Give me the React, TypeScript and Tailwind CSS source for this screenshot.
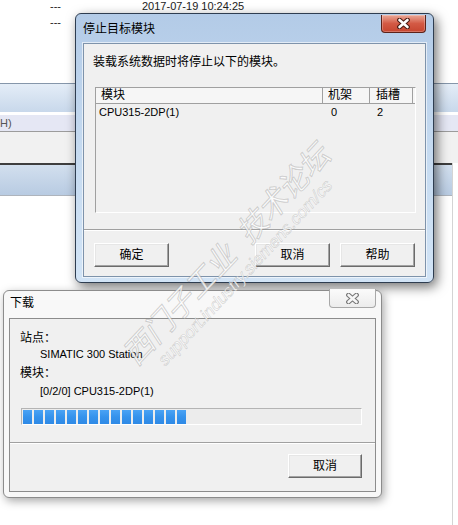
type BtnProps = { label: string; className?: string };

function ClassicButton({ label, className = "" }: BtnProps) {
  return (
    <button
      type="button"
      className={[
        "flex h-[24px] items-center justify-center border border-t-white border-l-white border-b-[#6b6b6b] border-r-[#6b6b6b] bg-[#f0f0f0] text-[12px] text-black shadow-[inset_-1px_-1px_0_#a3a3a3,inset_1px_1px_0_#e6e6e6]",
        className,
      ].join(" ")}
    >
      {label}
    </button>
  );
}

function CloseGlyph({ active }: { active: boolean }) {
  return (
    <svg width="15" height="11" viewBox="0 0 15 11">
      <path
        d="M3.5 2 L11.5 9 M11.5 2 L3.5 9"
        stroke={active ? "#4a1c14" : "#767676"}
        strokeWidth="4.8"
        strokeLinecap="round"
        fill="none"
      />
      <path
        d="M3.5 2 L11.5 9 M11.5 2 L3.5 9"
        stroke={active ? "#ffffff" : "#f6f6f6"}
        strokeWidth="2.6"
        strokeLinecap="round"
        fill="none"
      />
    </svg>
  );
}

function Separator() {
  return (
    <div className="flex flex-col">
      <div className="h-px bg-[#a0a0a0]" />
      <div className="h-px bg-white" />
    </div>
  );
}

function StopModulesDialog() {
  return (
    <div className="absolute left-[75px] top-[13px] flex h-[270px] w-[359px] flex-col rounded-[6px] border border-[#2e3d50] bg-gradient-to-b from-[#b3cbe7] via-[#c5daf0] to-[#d2e4f6] px-[7px] pb-[5px] shadow-[3px_4px_12px_rgba(0,0,0,0.55)]">
      <div className="flex h-[29px] items-start justify-between">
        <span className="mt-[7px] text-[12px] leading-[16px] text-black">停止目标模块</span>
        <div className="mt-px flex h-[18px] w-[45px] items-center justify-center rounded-b-[4px] border border-t-0 border-[#5c2219] bg-gradient-to-b from-[#e9a797] via-[#d35a45] to-[#c6452f] shadow-[inset_0_0_0_1px_rgba(255,255,255,0.25)]">
          <CloseGlyph active />
        </div>
      </div>

      <div className="flex flex-1 flex-col border border-[#7e93ab] bg-[#f0f0f0] shadow-[0_0_0_1px_rgba(255,255,255,0.6)]">
        <p className="mt-[10px] pl-[9px] text-[12px] leading-[16px] text-black">
          装载系统数据时将停止以下的模块。
        </p>

        <div className="ml-[11px] mt-[17px] h-[126px] w-[321px] border border-t-[#a0a0a0] border-l-[#a0a0a0] border-b-white border-r-white bg-[#f0f0f0] text-[12px] text-black">
          <div className="flex h-[16px] border-b border-[#a0a0a0] bg-[#f6f6f6] leading-[15px]">
            <div className="w-[227px] border-r border-[#a0a0a0] pl-[5px]">模块</div>
            <div className="w-[47px] border-r border-[#a0a0a0] pl-[5px]">机架</div>
            <div className="w-[43px] border-r border-[#a0a0a0] pl-[6px]">插槽</div>
          </div>
          <div className="flex h-[16px] text-[11px] leading-[16px]">
            <div className="w-[227px] pl-[3px]">CPU315-2DP(1)</div>
            <div className="w-[47px] pl-[8px]">0</div>
            <div className="w-[43px] pl-[7px]">2</div>
          </div>
        </div>

        <div className="mt-[16px]">
          <Separator />
        </div>

        <div className="mt-[12px] flex pl-[10px] pr-[10px]">
          <ClassicButton label="确定" className="w-[75px]" />
          <ClassicButton label="取消" className="ml-auto w-[75px]" />
          <ClassicButton label="帮助" className="ml-[10px] w-[75px]" />
        </div>
      </div>
    </div>
  );
}

function DownloadDialog() {
  const blocks = Array.from({ length: 15 }, (_, i) => i);
  return (
    <div className="absolute left-[3px] top-[290px] flex h-[208px] w-[379px] flex-col rounded-[6px] border border-[#8c8c8c] bg-[#f8f8f8] px-[5px] pb-[5px] shadow-[2px_3px_10px_rgba(0,0,0,0.35)]">
      <div className="flex h-[27px] items-start justify-between">
        <span className="ml-px mt-[4px] text-[12px] leading-[16px] text-black">下载</span>
        <div className="-mt-[2px] flex h-[19px] w-[47px] items-center justify-center rounded-b-[4px] border border-t-0 border-[#a8a8a8] bg-gradient-to-b from-[#fbfbfb] to-[#ececec]">
          <CloseGlyph active={false} />
        </div>
      </div>

      <div className="flex flex-1 flex-col border border-[#8c8c8c] bg-[#f0f0f0] text-black">
        <p className="mt-[11px] pl-[10px] text-[12px] leading-[16px]">站点：</p>
        <p className="pl-[30px] text-[11px] leading-[16px]">SIMATIC 300 Station</p>
        <p className="mt-[3px] pl-[10px] text-[12px] leading-[16px]">模块：</p>
        <p className="mt-[2px] pl-[30px] text-[11px] leading-[16px]">[0/2/0] CPU315-2DP(1)</p>

        <div className="ml-[11px] mt-[9px] flex h-[17px] w-[341px] items-start gap-[2px] border border-t-[#b4b4b4] border-l-[#b4b4b4] border-b-white border-r-white bg-[#ececec] pl-px pt-px">
          {blocks.map((i) => (
            <div key={i} className="h-[14px] w-[9px] bg-gradient-to-b from-[#4aa3f5] via-[#3592ec] to-[#2f8ae6]" />
          ))}
        </div>

        <div className="mt-[17px]">
          <Separator />
        </div>

        <div className="mt-[10px] flex justify-end pr-[13px]">
          <ClassicButton label="取消" className="w-[74px]" />
        </div>
      </div>
    </div>
  );
}

function Backdrop() {
  return (
    <div className="flex h-full flex-col text-[11px] text-[#222]">
      <div className="h-[83px]">
        <div className="-mt-[2px] flex h-4 items-center pl-[50px] leading-[16px]">
          <span className="w-[92px]">---</span>
          <span>2017-07-19 10:24:25</span>
        </div>
        <div className="flex h-4 items-center pl-[50px] leading-[16px]">
          <span>---</span>
        </div>
      </div>
      <div className="h-px bg-[#8596aa]" />
      <div className="h-[28px] bg-gradient-to-b from-[#e4edf7] to-[#c8d8eb]" />
      <div className="h-[3px] bg-white" />
      <div className="h-[16px] bg-[#e5e7f4] leading-[16px] text-[#555]">H)</div>
      <div className="h-px bg-[#9c9c9c]" />
      <div className="h-[31px] bg-[#f1f1f1]" />
      <div className="flex flex-1">
        <div className="flex w-[452px] flex-col">
          <div className="h-[2px] bg-[#3e3e3e]" />
          <div className="h-[30px] bg-gradient-to-b from-[#d2dfee] to-[#b8cbe2]" />
          <div className="h-px bg-[#aeb4bc]" />
          <div className="flex-1 bg-white" />
        </div>
        <div className="w-px bg-[#d4d4d4]" />
        <div className="flex-1 bg-white" />
      </div>
    </div>
  );
}

function Watermark() {
  return (
    <div className="pointer-events-none absolute left-[234px] top-[262px]">
      <div className="flex -translate-x-1/2 -translate-y-1/2 -rotate-[47deg] flex-col items-center whitespace-nowrap italic">
        <span className="text-[30px] leading-[32px] text-[rgba(255,255,255,0.8)] [-webkit-text-stroke:1px_rgba(110,110,110,0.3)]">
          西门子工业&nbsp;&nbsp;技术论坛
        </span>
        <span className="text-[17px] leading-[20px] text-[rgba(255,255,255,0.85)] [-webkit-text-stroke:0.6px_rgba(110,110,110,0.3)]">
          support.industry.siemens.com/cs
        </span>
      </div>
    </div>
  );
}

export default function App() {
  return (
    <div className="relative h-[525px] w-[458px] overflow-hidden bg-white font-[family-name:'Liberation_Sans','Noto_Sans_CJK_SC',sans-serif]">
      <Backdrop />
      <StopModulesDialog />
      <DownloadDialog />
      <Watermark />
    </div>
  );
}
